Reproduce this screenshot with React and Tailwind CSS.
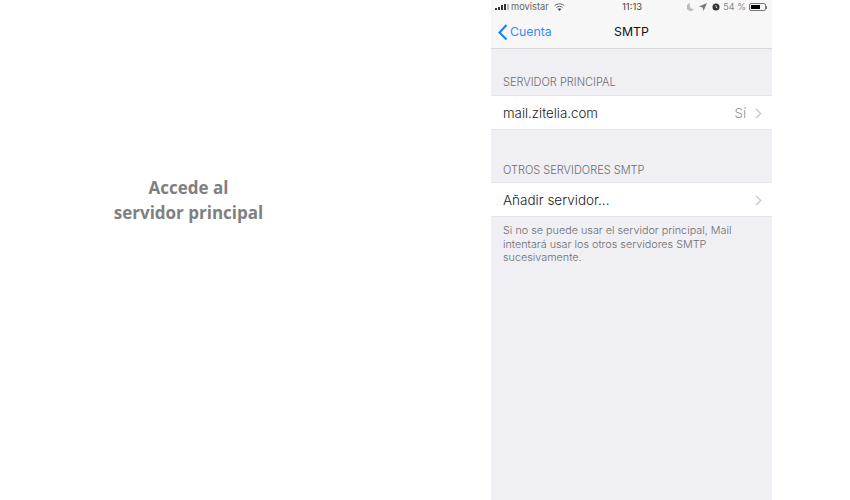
function Chevron() {
  return (
    <svg width="7" height="11" viewBox="0 0 7 11" fill="none">
      <path d="M1 1l4.600 4.500L1 10" stroke="#c7c7cc" strokeWidth="1.400" />
    </svg>
  );
}

function StatusBar() {
  return (
    <div className="h-[14px] flex items-center justify-between pl-[4px] pr-[5px] text-[9.500px] text-[#666] relative">
      <div className="flex items-center">
        <div className="flex items-end gap-[1px] h-[6px]">
          <span className="w-[2px] h-[2px] bg-[#333]" />
          <span className="w-[2px] h-[3px] bg-[#333]" />
          <span className="w-[2px] h-[5px] bg-[#333]" />
          <span className="w-[2px] h-[6px] bg-[#333]" />
          <span className="w-[2px] h-[6px] bg-[#bbb]" />
        </div>
        <span className="ml-[2px] text-[9.300px]">movistar</span>
        <svg className="ml-[5px]" width="11" height="8" viewBox="0 0 11 8" fill="none">
          <path d="M.6 2.800C3.400.2 7.600.2 10.400 2.800" stroke="#666" strokeWidth="1" />
          <path d="M2.300 4.500c1.800-1.600 4.600-1.600 6.400 0" stroke="#666" strokeWidth="1" />
          <path d="M5.500 8L3.600 6c1.100-.9 2.700-.9 3.800 0z" fill="#555" />
        </svg>
      </div>
      <span className="absolute left-[131px] top-0 leading-[14px] text-[#444]">11:13</span>
      <div className="flex items-center text-[#888] text-[9px]">
        <svg width="7" height="8" viewBox="0 0 7 8">
          <path d="M3 0a4 4 0 1 0 4 6C4 6.500 2 4 3 0z" fill="#bbb" />
        </svg>
        <svg className="ml-[5px]" width="8" height="8" viewBox="0 0 8 8">
          <path d="M8 0L0 3.500l3.600.9L4.500 8z" fill="#777" />
        </svg>
        <svg className="ml-[5px]" width="8" height="8" viewBox="0 0 8 8">
          <circle cx="4" cy="4" r="3.500" fill="#333" />
          <path d="M4 2v2.200l1.300.8" stroke="#fff" strokeWidth=".7" fill="none" />
        </svg>
        <span className="ml-[3px]">54 %</span>
        <div className="ml-[3px] w-[17px] h-[8px] border border-[#777] rounded-[2px] p-[1px]">
          <div className="h-full w-[9px] bg-black" />
        </div>
        <span className="w-[1px] h-[3px] bg-[#777]" />
      </div>
    </div>
  );
}

function Row({ label, value, textClass }) {
  return (
    <div className={`h-[35px] ${textClass} flex items-center bg-white border-y border-[#e6e6ea] pl-[12px] pr-[10px] font-light text-[#222]`}>
      <span className="flex-1">{label}</span>
      {value && <span className="text-[#8e8e93] mr-[9px]">{value}</span>}
      <Chevron />
    </div>
  );
}

export default function App() {
  return (
    <div className="flex w-[850px] h-[500px] bg-white overflow-hidden font-['Open_Sans',sans-serif]">
      <div className="w-[377px] flex items-center justify-center">
        <h1 className="text-center text-[17px] leading-[25px] font-bold text-[#808080] mb-[100px]">
          Accede al<br />servidor principal
        </h1>
      </div>

      <div className="ml-[114px] w-[281px] h-full bg-[#efeff4] font-['Inter',sans-serif]">
        <div className="bg-[#f7f7f7] border-b border-[#d8d8dc] h-[49px]">
          <StatusBar />
          <div className="relative flex items-center h-[34px] pt-[2px]">
            <svg className="ml-[7px]" width="10" height="17" viewBox="0 0 10 17" fill="none">
              <path d="M8.500 1L1.500 8.500l7 7" stroke="#1a7df8" strokeWidth="2" />
            </svg>
            <span className="ml-[2px] text-[12.300px] text-[#3a8bf5]">Cuenta</span>
            <span className="absolute left-[123px] text-[12.300px] text-[#111]">SMTP</span>
          </div>
        </div>

        <div className="pt-[27px] pb-[6px] pl-[12px] text-[11px] font-light leading-[13px] text-[#6d6d72]">SERVIDOR PRINCIPAL</div>
        <Row label="mail.zitelia.com" value="Sí" textClass="text-[13.300px] pt-[2px]" />

        <div className="pt-[34px] pb-[5px] pl-[12px] text-[11px] font-light leading-[13px] text-[#6d6d72]">OTROS SERVIDORES SMTP</div>
        <Row label="Añadir servidor..." textClass="text-[13.500px] pt-[1px]" />

        <p className="pt-[7px] px-[12px] text-[10.800px] font-light leading-[13.500px] text-[#6d6d72]">
          Si no se puede usar el servidor principal, Mail<br />intentará usar los otros servidores SMTP<br />sucesivamente.
        </p>
      </div>
    </div>
  );
}
